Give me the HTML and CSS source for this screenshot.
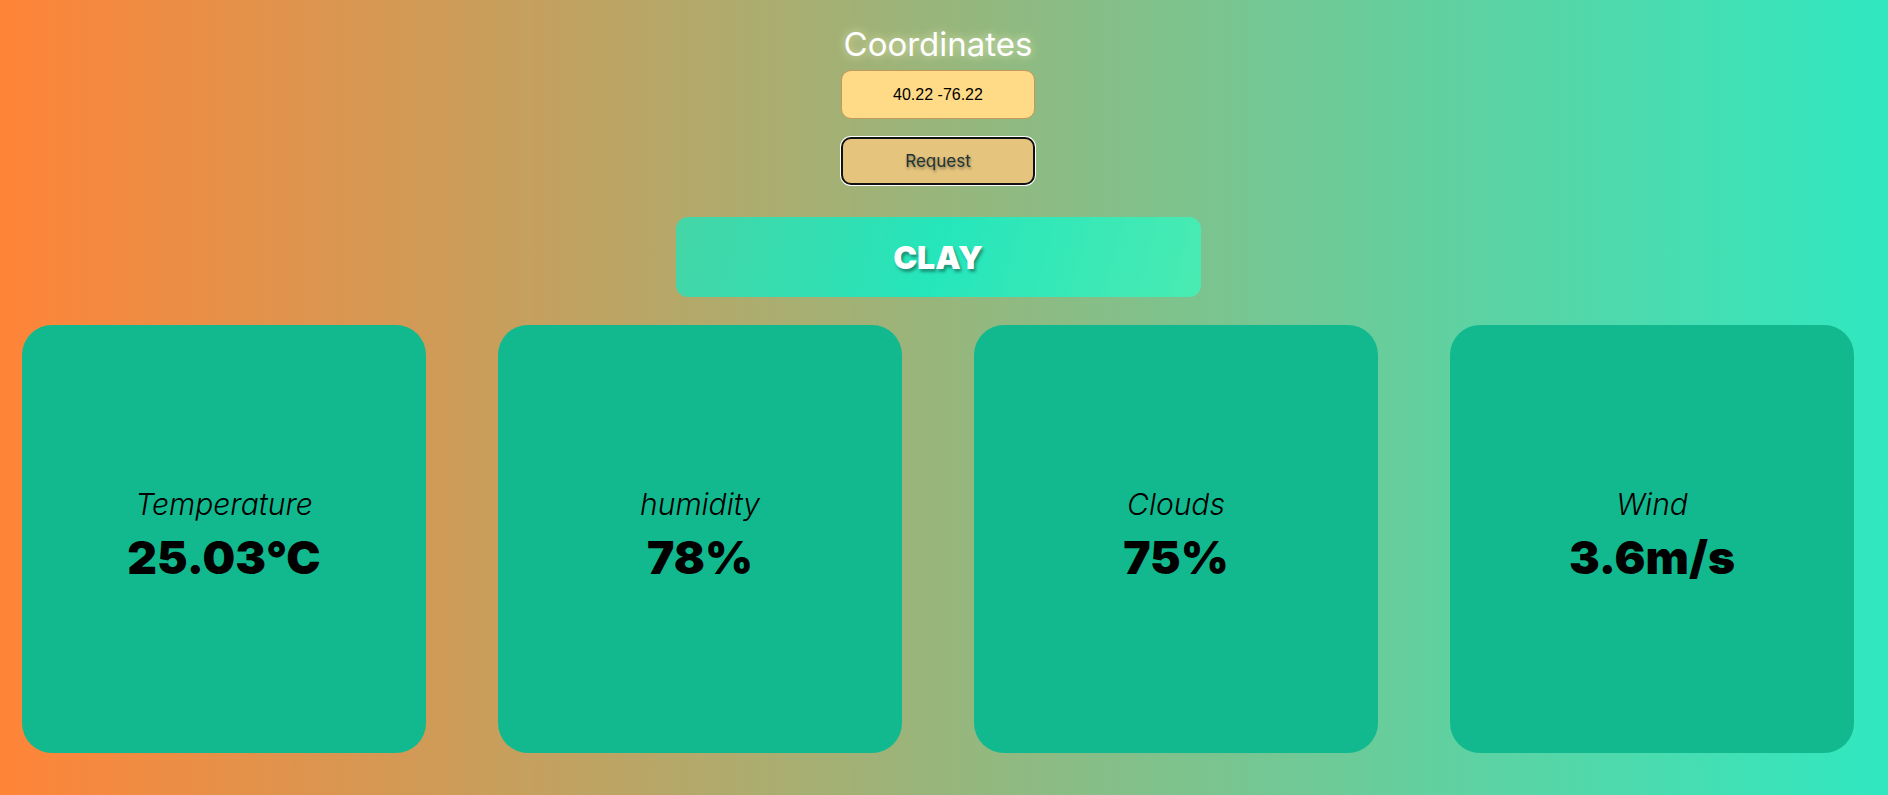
FILE: index.html
```html
<!DOCTYPE html>
<html lang="en">
<head>
<meta charset="utf-8">
<title>Weather</title>
<link rel="stylesheet" href="styles.css">
</head>
<body>
<main class="page">
  <section class="search">
    <h1 class="title">Coordinates</h1>
    <input class="coords" type="text" value="40.22 -76.22">
    <button class="request" type="button">Request</button>
  </section>
  <div class="place-row">
    <div class="place">CLAY</div>
  </div>
  <section class="cards">
    <div class="card"><div class="label">Temperature</div><div class="value">25.03°C</div></div>
    <div class="card"><div class="label">humidity</div><div class="value">78%</div></div>
    <div class="card"><div class="label">Clouds</div><div class="value">75%</div></div>
    <div class="card"><div class="label">Wind</div><div class="value">3.6m/s</div></div>
  </section>
</main>
</body>
</html>
```

FILE: styles.css
```css
* { box-sizing: border-box; }
html, body { margin: 0; height: 100%; }
body {
  width: 1888px;
  height: 795px;
  overflow: hidden;
  background: linear-gradient(90deg, #ff8438 0%, #30e8c0 100%);
  font-family: Inter, "Noto Sans", sans-serif;
}
.page {
  display: flex;
  flex-direction: column;
  padding: 24px 34px 0 22px;
}
.search {
  display: flex;
  flex-direction: column;
  align-items: center;
}
.title {
  margin: 0;
  font-size: 33px;
  line-height: 40px;
  font-weight: 400;
  color: #fff;
  text-shadow: 0 0 10px rgba(255, 250, 200, 0.7);
}
.coords {
  margin-top: 6px;
  width: 194px;
  height: 49px;
  border: 1.5px solid #c29a5c;
  border-radius: 10px;
  background: #ffdb87;
  text-align: center;
  font-family: "Liberation Sans", Arial, sans-serif;
  font-size: 16px;
  color: #000;
  outline: none;
}
.request {
  margin-top: 18px;
  width: 194px;
  height: 48px;
  border: 2px solid #111;
  border-radius: 10px;
  box-shadow: 0 0 0 1px #fff;
  background: #e5c47e;
  font-family: Inter, "Noto Sans", sans-serif;
  font-size: 17px;
  color: #1d3434;
  text-shadow: 1px 2px 3px rgba(0, 0, 0, 0.4);
}
.place-row {
  display: flex;
  justify-content: center;
  margin-top: 32px;
}
.place {
  width: 525px;
  height: 80px;
  border-radius: 12px;
  background: linear-gradient(105deg, #44d5a6 0%, #25e6bb 50%, #4aebb2 100%);
  display: flex;
  align-items: center;
  justify-content: center;
  color: #fff;
  font-size: 32px;
  font-weight: 900;
  text-shadow: 2px 3px 3px rgba(0, 0, 0, 0.35);
}
.cards {
  display: flex;
  gap: 72px;
  margin-top: 28px;
}
.card {
  width: 404px;
  height: 428px;
  border-radius: 30px;
  background: #13b98e;
  display: flex;
  flex-direction: column;
  align-items: center;
  justify-content: center;
  gap: 8px;
  padding-bottom: 6px;
  color: #000;
}
.label {
  font-size: 30px;
  line-height: 1.2;
  font-weight: 300;
  font-style: italic;
}
.value {
  font-size: 46px;
  line-height: 1.2;
  font-weight: 900;
}
```
